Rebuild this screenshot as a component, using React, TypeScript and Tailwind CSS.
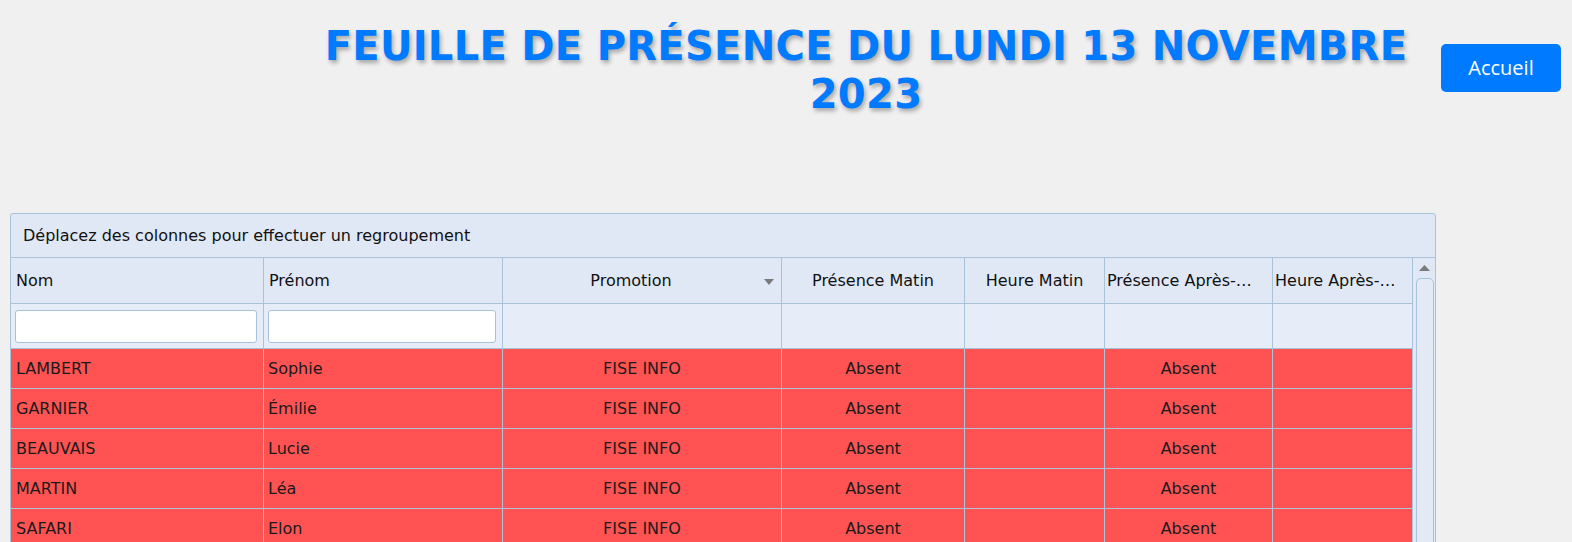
import React from 'react';

const columns = [
  { label: 'Nom', w: 'w-[253px]', pad: 'pl-[5px]' },
  { label: 'Prénom', w: 'w-[239px]', pad: 'pl-[5px]' },
  { label: 'Promotion', w: 'w-[279px]', pad: 'pl-[2px] pr-[24px] justify-center', menu: true },
  { label: 'Présence Matin', w: 'w-[183px]', pad: 'px-[2px] justify-center' },
  { label: 'Heure Matin', w: 'w-[140px]', pad: 'px-[2px] justify-center' },
  { label: 'Présence Après-midi', w: 'w-[168px]', pad: 'pl-[2px] pr-[14px] justify-center' },
  { label: 'Heure Après-midi', w: 'w-[140px]', pad: 'px-[2px] justify-center' },
];

const rows = [
  ['LAMBERT', 'Sophie'],
  ['GARNIER', 'Émilie'],
  ['BEAUVAIS', 'Lucie'],
  ['MARTIN', 'Léa'],
  ['SAFARI', 'Elon'],
  ['DUPONT', 'Marie'],
];

export default function App() {
  return (
    <div className="h-screen overflow-hidden bg-[#f0f0f0] font-['DejaVu_Sans',sans-serif] text-[#111]">
      {/* Header */}
      <header className="flex items-start pt-[22px]">
        <div className="ml-[291px] w-[1150px] text-center">
          <h1 className="text-[40px] leading-[48px] tracking-[0.3px] font-bold text-[#007bff] [text-shadow:2px_3px_4px_rgba(0,0,0,0.3)]">
            FEUILLE DE PRÉSENCE DU LUNDI 13 NOVEMBRE 2023
          </h1>
        </div>
        <button className="mt-[22px] w-[120px] h-[48px] rounded-[5px] bg-[#007bff] text-white text-[20px] font-['Open_Sans',sans-serif]">
          Accueil
        </button>
      </header>

      {/* Grid */}
      <div className="ml-[10px] mt-[95px] w-[1426px] border border-[#a8c2da] rounded-t-[3px] bg-[#e0e8f5]">
        <div className="h-[44px] border-b border-[#a8c2da] flex items-center pl-[12px] text-[16px]">
          Déplacez des colonnes pour effectuer un regroupement
        </div>

        <div className="flex">
          <div className="flex flex-col">
            {/* Column headers */}
            <div className="flex h-[46px] border-b border-[#a8c2da] bg-[#e0e8f5]">
              {columns.map((c) => (
                <div key={c.label} className={`${c.w} ${c.pad} relative border-r border-[#a8c2da] flex items-center text-[16px]`}>
                  <span className="overflow-hidden text-ellipsis whitespace-nowrap">{c.label}</span>
                  {c.menu && (
                    <svg className="absolute right-[7px] top-[21px]" width="10" height="6" viewBox="0 0 10 6">
                      <path d="M0 0 L10 0 L5 6 Z" fill="#7a7a7a" />
                    </svg>
                  )}
                </div>
              ))}
            </div>

            {/* Filter row */}
            <div className="flex h-[45px] border-b border-[#a8c2da] bg-[#e6edf8]">
              {columns.map((c, i) => (
                <div key={c.label} className={`${c.w} border-r border-[#a8c2da] flex items-center ${i < 2 ? 'pl-[4px] pr-[6px]' : ''}`}>
                  {i < 2 && (
                    <input className="w-full h-[33px] bg-white border border-[#a8c2da] rounded-[3px] outline-none" />
                  )}
                </div>
              ))}
            </div>

            {/* Data rows */}
            {rows.map(([nom, prenom]) => (
              <div key={nom} className="flex h-[40px] border-b border-[#aec4da] bg-[#ff5353] text-[16px] text-[#1a1a1a]">
                <div className="w-[253px] border-r border-[#aec4da] flex items-center pl-[5px]">{nom}</div>
                <div className="w-[239px] border-r border-[#aec4da] flex items-center pl-[4px]">{prenom}</div>
                <div className="w-[279px] border-r border-[#aec4da] flex items-center justify-center">FISE INFO</div>
                <div className="w-[183px] border-r border-[#aec4da] flex items-center justify-center">Absent</div>
                <div className="w-[140px] border-r border-[#aec4da]"></div>
                <div className="w-[168px] border-r border-[#aec4da] flex items-center justify-center">Absent</div>
                <div className="w-[140px] border-r border-[#aec4da]"></div>
              </div>
            ))}
          </div>

          {/* Scrollbar */}
          <div className="w-[22px] flex flex-col items-center bg-[#e0e8f5]">
            <svg className="mt-[7px]" width="11" height="6" viewBox="0 0 11 6">
              <path d="M0 6 L11 6 L5.5 0 Z" fill="#7a7a7a" />
            </svg>
            <div className="mt-[7px] ml-[2px] w-[18px] h-[400px] border border-[#a8c2da] rounded-t-[5px] bg-[#e3eaf6]"></div>
          </div>
        </div>
      </div>
    </div>
  );
}
